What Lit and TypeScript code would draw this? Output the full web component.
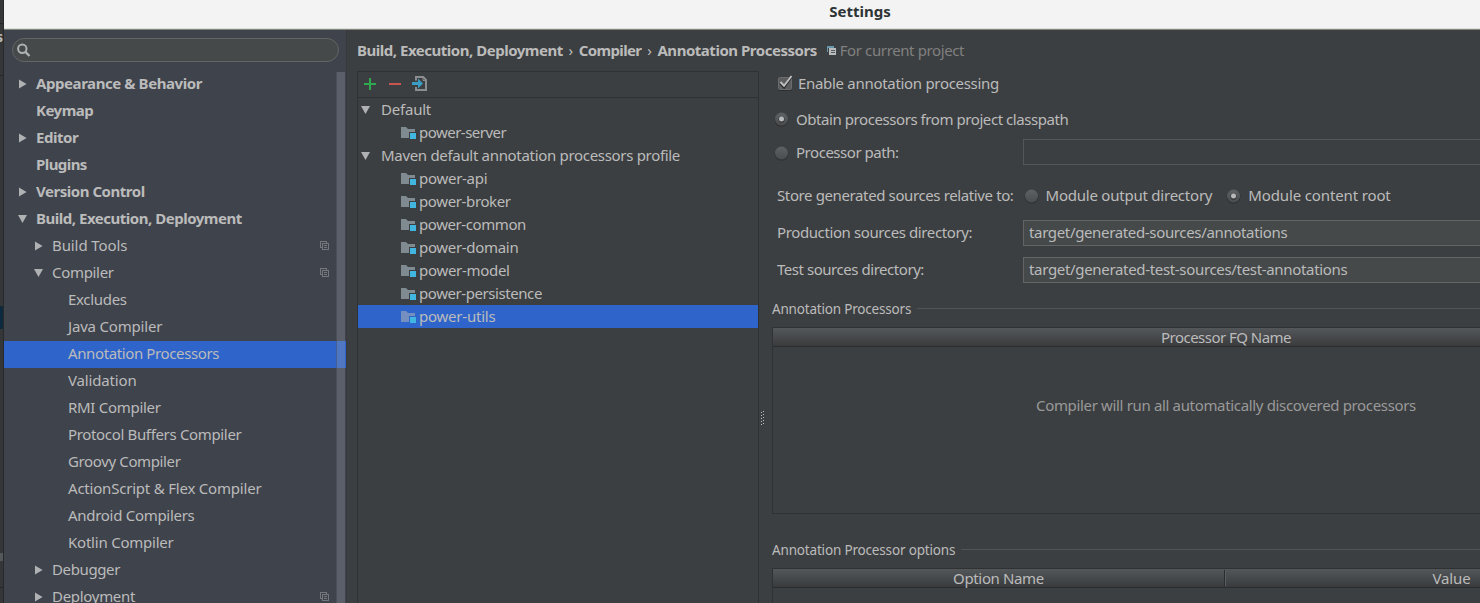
import { LitElement, html, svg, css } from "lit";
import { customElement } from "lit/decorators.js";
import { classMap } from "lit/directives/class-map.js";

interface Node {
  label: string;
  level: number;
  tighten: number;
  arrow?: "open" | "closed";
  copy?: boolean;
  selected?: boolean;
}

const TREE: Node[] = [
  { label: "Appearance & Behavior", level: 0, tighten: 9, arrow: "closed" },
  { label: "Keymap", level: 0, tighten: 3 },
  { label: "Editor", level: 0, tighten: 2.7, arrow: "closed" },
  { label: "Plugins", level: 0, tighten: 4 },
  { label: "Version Control", level: 0, tighten: 7, arrow: "closed" },
  { label: "Build, Execution, Deployment", level: 0, tighten: 13.5, arrow: "open" },
  { label: "Build Tools", level: 1, tighten: 1, arrow: "closed", copy: true },
  { label: "Compiler", level: 1, tighten: 2.5, arrow: "open", copy: true },
  { label: "Excludes", level: 2, tighten: 2.5 },
  { label: "Java Compiler", level: 2, tighten: 2.5 },
  { label: "Annotation Processors", level: 2, tighten: 8, selected: true },
  { label: "Validation", level: 2, tighten: 1.5 },
  { label: "RMI Compiler", level: 2, tighten: 3.5 },
  { label: "Protocol Buffers Compiler", level: 2, tighten: 8.5 },
  { label: "Groovy Compiler", level: 2, tighten: 5.5 },
  { label: "ActionScript & Flex Compiler", level: 2, tighten: 5.8 },
  { label: "Android Compilers", level: 2, tighten: 5 },
  { label: "Kotlin Compiler", level: 2, tighten: 3.3 },
  { label: "Debugger", level: 1, tighten: 3, arrow: "closed" },
  { label: "Deployment", level: 1, tighten: 3, arrow: "closed", copy: true },
];

const PROFILES: { name: string; tighten: number; modules: [string, number][] }[] = [
  { name: "Default", tighten: 1.5, modules: [["power-server", 6.3]] },
  {
    name: "Maven default annotation processors profile",
    tighten: 13.5,
    modules: [
      ["power-api", 2.5],
      ["power-broker", 4.5],
      ["power-common", 5],
      ["power-domain", 3.8],
      ["power-model", 3.3],
      ["power-persistence", 7.3],
      ["power-utils", 2.5],
    ],
  },
];

/** Text whose total advance is reduced by the given number of pixels. */
const txt = (s: string, px: number) => html`<span class="label" style="letter-spacing:${(-px / s.length).toFixed(3)}px">${s}</span>`;

const arrowIcon = (kind?: string) => html`<svg class="arrow" width="10" height="10" viewBox="0 0 10 10">
  ${kind === "open" ? svg`<path d="M0 1H9L4.5 9Z" fill="#afb1b3"/>` : kind === "closed" ? svg`<path d="M1 .5L8.6 5L1 9.5Z" fill="#afb1b3"/>` : ""}
</svg>`;

const copyIcon = html`<svg class="copy" width="10" height="10" viewBox="0 0 10 10" shape-rendering="crispEdges">
  <path d="M2.5 6.5H.5V.5H6.5V2.5M2.5 2.5H8.5V8.5H2.5ZM4 4.5H7M4 6.5H7" fill="none" stroke="#74787d"/>
</svg>`;

const projectIcon = html`<svg class="project" width="9" height="9" viewBox="0 0 9 9" shape-rendering="crispEdges">
  <path d="M0 0H7V2H2V6H0Z" fill="#6897ab"/>
  <path d="M1 2H2V6H1Z" fill="#3c3f41"/>
  <path d="M2 2H9V9H2Z" fill="#b9bbbc"/>
  <path d="M4 4H8V5H4ZM4 6H8V7H4Z" fill="#55585a"/>
</svg>`;

const folderIcon = html`<svg class="folder" width="16" height="16" viewBox="0 0 16 16">
  <path class="fold" d="M1 2H6L8 4H15V13H1Z"/>
  <path class="gap" d="M9 7H16V14H9Z"/>
  <path d="M10 8H16V14H10Z" fill="#40b6e0"/>
</svg>`;

const radio = (on: boolean) => html`<svg class="radio" width="16" height="16" viewBox="0 0 16 16">
  <defs><linearGradient id="g" x1="0" y1="0" x2="0" y2="1"><stop offset="0" stop-color="#5f6264"/><stop offset="1" stop-color="#4a4d4f"/></linearGradient></defs>
  <circle cx="7.5" cy="8.7" r="7" fill="#303234"/><circle cx="7.5" cy="8" r="6.5" fill="url(#g)"/>
  ${on ? svg`<circle cx="7.5" cy="8.7" r="3" fill="#303030"/><circle cx="7.5" cy="7.9" r="2.5" fill="#b8b9ba"/>` : ""}
</svg>`;

@customElement("app-root")
export class AppRoot extends LitElement {
  static styles = css`
    :host { display: flex; width: 100%; height: 603px; overflow: hidden; background: #3c3f41; color: #bbbbbb;
      font: 15px/20px "Noto Sans", sans-serif; white-space: nowrap; }
    * { box-sizing: border-box; }
    svg { display: block; flex: none; }
    .behind { width: 4px; flex: none; overflow: hidden; border-right: 1px solid #27292a; background: #343638; display: flex; flex-direction: column; font-weight: 700; font-size: 14px; line-height: 22px; }
    .behind .top { height: 24px; border-bottom: 1px solid #242526; }
    .behind .mid { height: 52px; border-bottom: 1px solid #242526; display: flex; justify-content: flex-end; padding-top: 2px; }
    .behind .gapa { height: 230px; }
    .behind .sel { height: 23px; background: #0d293e; }
    .behind .gapb { height: 224px; }
    .behind .bar { height: 8px; background: #55585a; }
    .behind .low { height: 27px; border-bottom: 1px solid #242526; }
    .window { flex: 1; min-width: 0; display: flex; flex-direction: column; }
    .title { height: 30px; flex: none; background: #f3f3f3; color: #2e3436; font-weight: 700; display: flex; justify-content: center; line-height: 20px; padding: 1px 0 0 236px; border-bottom: 1px solid #81867f; box-shadow: inset 0 -1px #dcdeda; }
    .main { flex: 1; min-height: 0; display: flex; }
    .side { width: 343px; flex: none; background: #3f434c; border-right: 1px solid #37393d; display: flex; flex-direction: column; }
    .search { width: 327px; height: 24px; flex: none; margin: 8px 0 9px 8px; border: 1px solid #646464; border-radius: 12px; background: #45494a; display: flex; align-items: center; padding-left: 4px; }
    .treebox { flex: 1; min-height: 0; overflow: hidden; display: grid; grid-template-columns: 1fr; }
    .treebox > * { grid-area: 1 / 1; }
    .scroll { justify-self: end; width: 9px; margin: 1px 1px 0 0; background: rgba(160, 166, 176, .29); border-left: 1px solid rgba(50, 53, 58, .35); z-index: 1; }
    .row { height: 27px; display: flex; align-items: center; padding: 0 0 2px 14px; }
    .row.l1 { padding-left: 30px; } .row.l2 { padding-left: 46px; }
    .row.l0 .label { font-weight: 700; }
    .row.selected { background: #2f65ca; }
    .row .arrow { margin-right: 8px; }
    .label { padding-bottom: 1px; }
    .row .label { flex: 1; }
    .row .copy { margin-right: 16px; }
    .content { flex: 1; min-width: 0; display: flex; flex-direction: column; padding-left: 10px; }
    .crumbs { height: 41px; flex: none; display: flex; align-items: center; font-weight: 700; }
    .crumbs .sep { font-weight: 400; width: 16px; text-align: center; padding-bottom: 1px; }
    .crumbs .project { margin: 0 4px 0 10px; }
    .crumbs .note { font-weight: 400; color: #808080; padding-bottom: 2px; }
    .split { flex: 1; min-height: 0; display: flex; }
    .profiles { width: 402px; flex: none; border: 1px solid #2f3132; border-bottom: 0; }
    .tools { height: 26px; border-bottom: 1px solid #2f3132; display: flex; align-items: center; padding: 0 0 1px 4px; gap: 9px; }
    .prow { height: 23px; display: flex; align-items: center; padding-left: 3px; }
    .prow .arrow { margin-right: 10px; }
    .prow.module { padding-left: 42px; }
    .prow.module .folder { margin-right: 3px; }
    .fold { fill: #87939a; fill-opacity: .9; } .gap { fill: #3c3f41; }
    .prow.on { background: #2f65ca; } .on .gap { fill: #2f65ca; } .on .fold { fill: #7d94bd; }
    .grip { width: 13px; flex: none; padding: 339px 0 0 2px; }
    .form { flex: 1; min-width: 0; display: flex; flex-direction: column; }
    .line { display: flex; align-items: center; height: 26px; padding-left: 5px; flex: none; }
    .radio { margin: 0 6px 0 -3px; }
    .lower .radio { margin-top: 1px; }
    .check { margin-right: 5px; }
    .first { margin-top: -1px; }
    .obtain { margin-top: 10px; }
    .path { margin-top: 7px; }
    .store { margin-top: 17px; }
    .out { padding-left: 13px; }
    .root { padding-left: 17px; }
    .prod { margin-top: 12px; }
    .test { margin-top: 11px; }
    .cap { width: 246px; flex: none; }
    .prod .cap, .test .cap { padding-bottom: 2px; }
    .path .cap { padding: 0; }
    .field { flex: 1; height: 26px; border: 1px solid #646464; border-right: 0; background: #45494a; padding: 1px 0 0 5px; }
    .field .label { display: inline-block; line-height: 18px; }
    .field.off { background: #3c3f41; border-color: #555657; }
    .group { display: flex; align-items: center; height: 18px; font-size: 13.5px; flex: none; gap: 6px; }
    .group .label { padding: 0; }
    .group::after { content: ""; flex: 1; height: 1px; background: #515354; margin-top: -2px; }
    .apt { margin-top: 17px; }
    .opt { margin-top: 27px; }
    .table { width: 908px; height: 100px; flex: none; border: 1px solid #2f3132; display: flex; flex-direction: column; margin-top: 9px; }
    .table.tall { height: 187px; }
    .head { display: flex; height: 19px; flex: none; border-bottom: 1px solid #2a2c2d; background: linear-gradient(#54575a, #393b3d); line-height: 19px; text-align: center; }
    .head div { flex: 1; }
    .head i { width: 2px; margin: 1px 0; border-left: 1px solid #2a2c2d; border-right: 1px solid #5b5e60; }
    .head .val { padding-right: 2px; }
    .empty { text-align: center; color: #999999; padding-top: 48px; }
  `;

  private module([name, px]: [string, number]) {
    return html`<div class=${classMap({ prow: true, module: true, on: name === "power-utils" })}>${folderIcon}${txt(name, px)}</div>`;
  }

  render() {
    return html`
      <div class="behind"><div class="top"></div><div class="mid">s</div><div class="gapa"></div><div class="sel"></div><div class="gapb"></div><div class="bar"></div><div class="low"></div></div>
      <div class="window">
        <div class="title">Settings</div>
        <div class="main">
          <div class="side">
            <div class="search"><svg width="14" height="14" viewBox="0 0 14 14" fill="none" stroke="#afb1b3"><circle cx="5.3" cy="5.8" r="4.2" stroke-width="2"/><path d="M8.4 8.9L12.5 13" stroke-width="2.3"/></svg></div>
            <div class="treebox">
              <div>${TREE.map((n) => html`<div class=${classMap({ row: true, ["l" + n.level]: true, selected: !!n.selected })}>
                ${arrowIcon(n.arrow)}${txt(n.label, n.tighten)}${n.copy ? copyIcon : ""}</div>`)}</div>
              <div class="scroll"></div>
            </div>
          </div>
          <div class="content">
            <div class="crumbs">${txt("Build, Execution, Deployment", 13.5)}<span class="sep">›</span>${txt("Compiler", 5)}<span class="sep">›</span>${txt("Annotation Processors", 10)}${projectIcon}<span class="note">${txt("For current project", 7.3)}</span></div>
            <div class="split">
              <div class="profiles">
                <div class="tools">
                  <svg width="16" height="16" viewBox="0 0 16 16"><path d="M2 8H14M8 2V14" stroke="#2fa84f" stroke-width="2"/></svg>
                  <svg width="16" height="16" viewBox="0 0 16 16"><path d="M2 8H14" stroke="#c75450" stroke-width="2"/></svg>
                  <svg width="16" height="16" viewBox="0 0 16 16"><path d="M4 4.5V1H11.2L14 3.8V14H4V11" fill="none" stroke="#8b8d8f" stroke-width="2"/><path d="M11 1V4.5H14" fill="none" stroke="#8b8d8f"/><path d="M0 6H6V2.5L11 7.5L6 12.5V9H0Z" fill="#3c9dc4"/></svg>
                </div>
                ${PROFILES.map((p) => html`<div class="prow">${arrowIcon("open")}${txt(p.name, p.tighten)}</div>${p.modules.map((m) => this.module(m))}`)}
              </div>
              <div class="grip"><svg width="5" height="16" viewBox="0 0 5 16" shape-rendering="crispEdges">
                ${[0, 1, 2, 3, 4].map((i) => svg`<rect x="2" y=${i * 3 + 1} width="1" height="1" fill="#c0c0c0"/><rect x="0" y=${i * 3 + 2} width="1" height="1" fill="#c0c0c0"/>`)}
              </svg></div>
              <div class="form">
                <div class="line first"><svg class="check" width="16" height="16" viewBox="0 0 16 16"><rect x="1" y="2" width="14" height="14" rx="2" fill="#2d2f30"/><rect x="1.5" y="2.5" width="13" height="12" rx="1" fill="#5b5d5f" stroke="#696b6d"/><path d="M3.5 8L7 11.8L14 2" fill="none" stroke="#292b2c" stroke-width="3"/><path d="M3.5 7L7 10.8L14.5 1" fill="none" stroke="#c0c0c0" stroke-width="2"/></svg>${txt("Enable annotation processing", 8.5)}</div>
                <div class="line obtain">${radio(true)}${txt("Obtain processors from project classpath", 17.3)}</div>
                <div class="line path"><div class="cap line lower">${radio(false)}${txt("Processor path:", 7)}</div><div class="field off"></div></div>
                <div class="line store">${txt("Store generated sources relative to:", 13.8)}<span class="line out lower">${radio(false)}${txt("Module output directory", 5.2)}</span><span class="line root lower">${radio(true)}${txt("Module content root", 2.5)}</span></div>
                <div class="line prod"><span class="cap">${txt("Production sources directory:", 11.3)}</span><div class="field">${txt("target/generated-sources/annotations", 12.5)}</div></div>
                <div class="line test"><span class="cap">${txt("Test sources directory:", 10.5)}</span><div class="field">${txt("target/generated-test-sources/test-annotations", 15)}</div></div>
                <div class="group apt">${txt("Annotation Processors", 4)}</div>
                <div class="table tall"><div class="head"><div>${txt("Processor FQ Name", 9)}</div></div><div class="empty">${txt("Compiler will run all automatically discovered processors", 19.5)}</div></div>
                <div class="group opt">${txt("Annotation Processor options", 4.8)}</div>
                <div class="table"><div class="head"><div>${txt("Option Name", 4)}</div><i></i><div class="val">${txt("Value", 0.5)}</div></div></div>
              </div>
            </div>
          </div>
        </div>
      </div>`;
  }
}
